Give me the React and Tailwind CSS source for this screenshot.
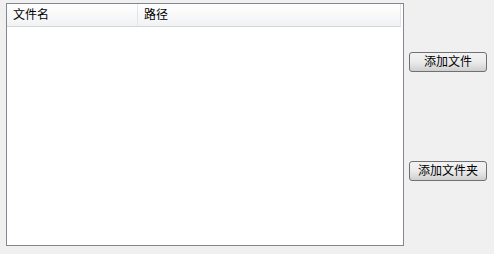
export default function App() {
  return (
    <div
      className="w-[494px] h-[254px] bg-[#f0f0f0] flex items-start text-[12px] text-black"
      style={{ fontFamily: '"Liberation Sans", "Noto Sans CJK SC", sans-serif' }}
    >
      <div className="ml-[6px] mt-[3px] w-[398px] h-[243px] border border-[#828790] bg-white flex flex-col">
        <div className="flex h-[23px] w-[394px] bg-gradient-to-b from-white to-[#f1f2f4] border-b border-[#d5d5d5] border-r border-r-[#e3e3e3]">
          <div className="w-[131px] pl-[6px] flex items-center border-r border-[#e3e5e8] leading-none">文件名</div>
          <div className="flex-1 pl-[6px] flex items-center leading-none">路径</div>
        </div>
      </div>
      <div className="ml-[5px] flex flex-col">
        <button className="mt-[52px] w-[78px] h-[20px] rounded-[3px] border border-[#707070] bg-gradient-to-b from-[#f2f2f2] via-[#ebebeb] to-[#cfcfcf] flex items-center justify-center leading-none">
          添加文件
        </button>
        <button className="mt-[89px] w-[78px] h-[20px] rounded-[3px] border border-[#707070] bg-gradient-to-b from-[#f2f2f2] via-[#ebebeb] to-[#cfcfcf] flex items-center justify-center leading-none">
          添加文件夹
        </button>
      </div>
    </div>
  )
}
